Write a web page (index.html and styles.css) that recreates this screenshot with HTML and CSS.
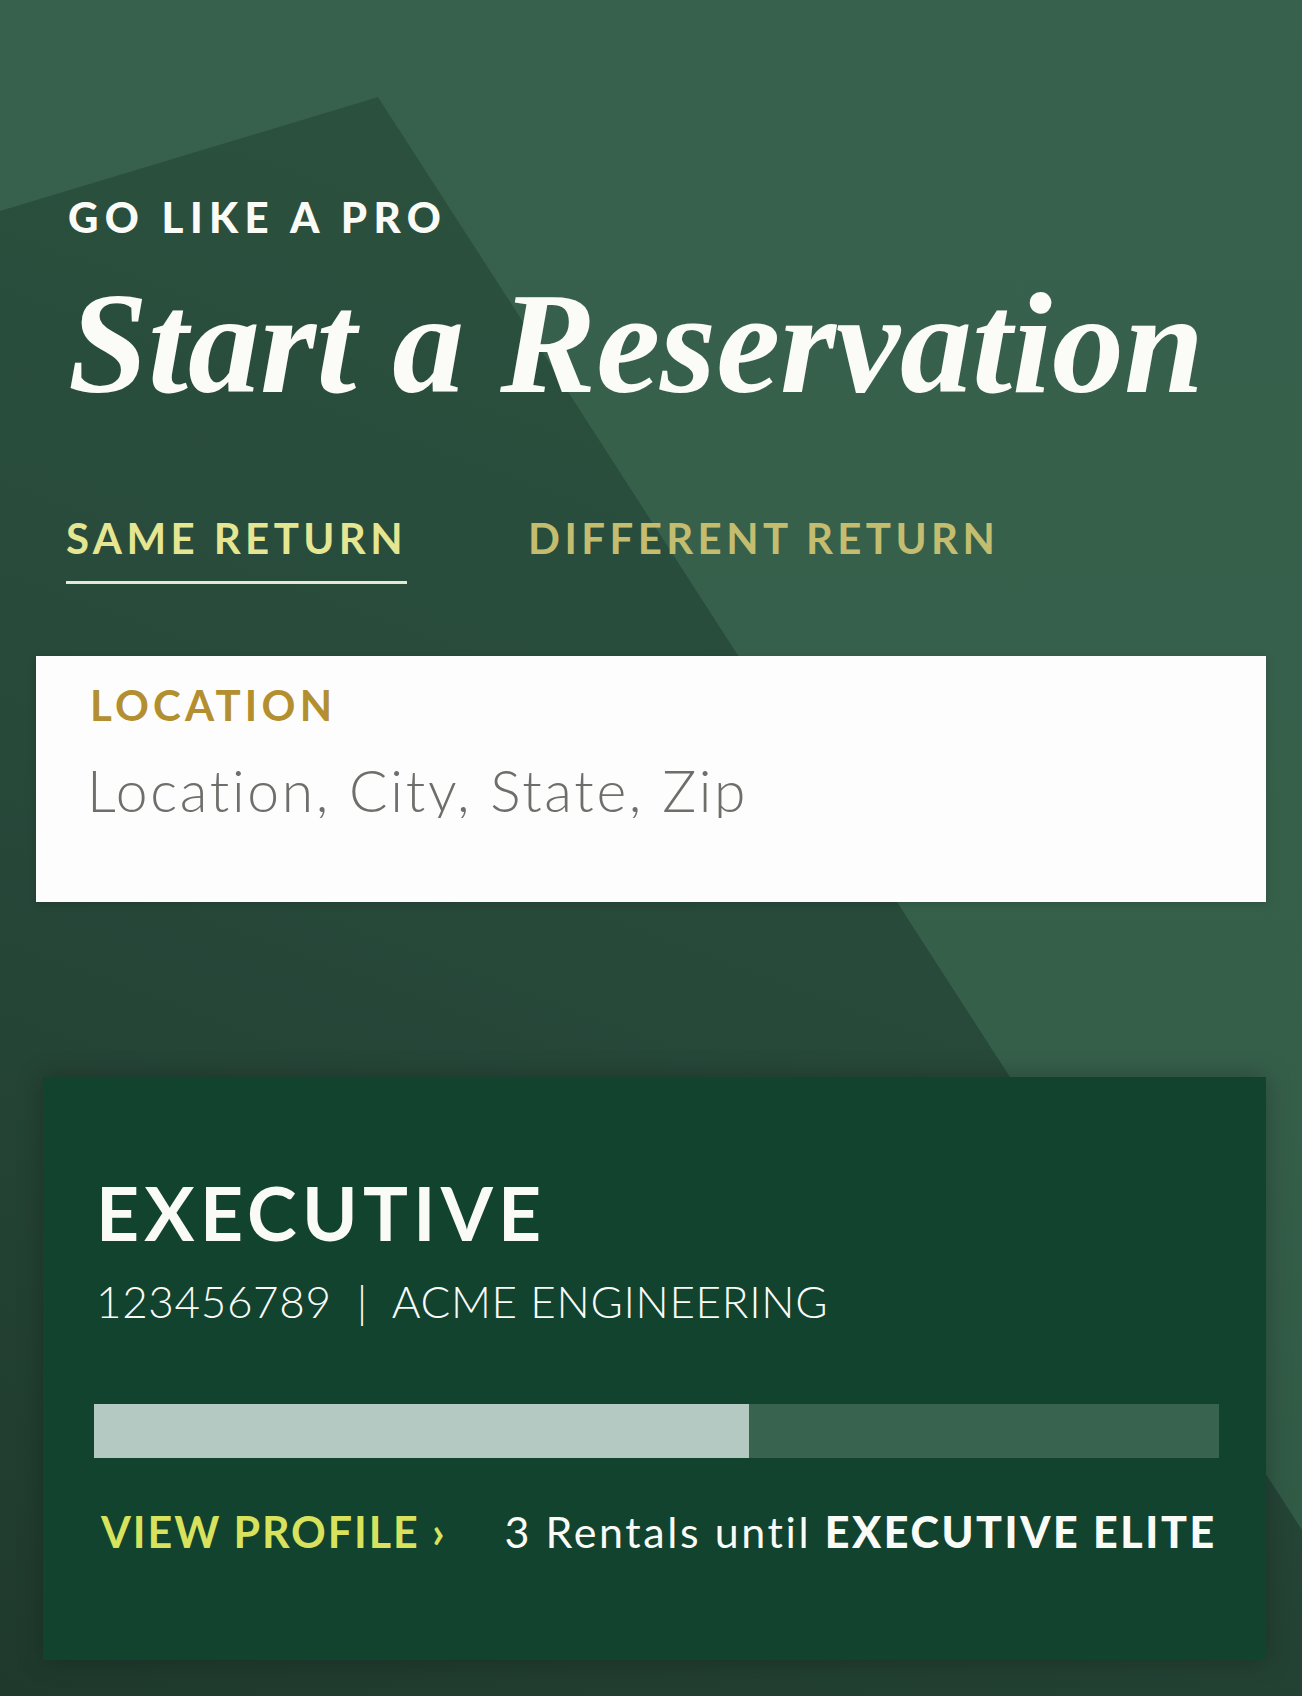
FILE: index.html
```html
<!DOCTYPE html>
<html lang="en">
<head>
  <meta charset="UTF-8">
  <meta name="viewport" content="width=device-width, initial-scale=1.0">
  <title>Start a Reservation</title>
  <link rel="stylesheet" href="styles.css">
</head>
<body>
  <div class="page">
    <svg class="backdrop" viewBox="0 0 1302 1696" preserveAspectRatio="none" aria-hidden="true">
      <defs>
        <linearGradient id="light" x1="0" y1="0" x2="0" y2="1">
          <stop offset="0" stop-color="#38614d"/>
          <stop offset="0.6" stop-color="#365f4a"/>
          <stop offset="1" stop-color="#2f5944"/>
        </linearGradient>
        <linearGradient id="dark" x1="0.3" y1="0" x2="0" y2="1">
          <stop offset="0" stop-color="#2b513e"/>
          <stop offset="0.45" stop-color="#27493a"/>
          <stop offset="1" stop-color="#1f3a2d"/>
        </linearGradient>
      </defs>
      <rect width="1302" height="1696" fill="url(#light)"/>
      <polygon points="0,211 378,97 1302,1530 1302,1696 0,1696" fill="url(#dark)"/>
    </svg>

    <header class="hero">
      <p class="eyebrow">GO LIKE A PRO</p>
      <h1 class="title">Start a Reservation</h1>
    </header>

    <nav class="tabs">
      <a class="tab active" href="#">SAME RETURN</a>
      <a class="tab" href="#">DIFFERENT RETURN</a>
    </nav>

    <label class="location">
      <span class="location-label">LOCATION</span>
      <input class="location-input" type="text" placeholder="Location, City, State, Zip">
    </label>

    <section class="status-card">
      <h2 class="tier">EXECUTIVE</h2>
      <p class="member">123456789 &nbsp;|&nbsp; ACME ENGINEERING</p>
      <div class="progress">
        <div class="progress-fill" style="width: 58.2%"></div>
      </div>
      <div class="card-footer">
        <a class="profile-link" href="#">VIEW PROFILE ›</a>
        <span class="next-tier">3 Rentals until <strong>EXECUTIVE ELITE</strong></span>
      </div>
    </section>
  </div>
</body>
</html>
```

FILE: styles.css
```css
body {
  margin: 0;
  font-family: Lato, 'Open Sans', sans-serif;
  color: #fafaf7;
  background: #2c5140;
}
.page {
  position: relative;
  width: 1302px;
  height: 1696px;
  overflow: hidden;
}
.backdrop {
  position: absolute;
  top: 0;
  left: 0;
  width: 100%;
  height: 100%;
  z-index: 0;
}
.hero, .tabs, .location, .status-card {
  position: relative;
  z-index: 1;
}
.hero {
  padding: 196px 0 0 68px;
}
.eyebrow {
  margin: 0;
  font-size: 42px;
  line-height: 1;
  font-weight: 900;
  letter-spacing: 0.152em;
}
.title {
  margin: 34px 0 0;
  font-family: 'Liberation Serif', 'DejaVu Serif', serif;
  font-style: italic;
  font-weight: 700;
  font-size: 144px;
  line-height: 1;
  color: #fbfbf8;
}
.tabs {
  display: flex;
  gap: 121px;
  margin: 101px 0 0 66px;
}
.tab {
  font-size: 42px;
  line-height: 1;
  font-weight: 700;
  letter-spacing: 0.105em;
  text-decoration: none;
  color: #c4bd70;
  padding-bottom: 22px;
}
.tab.active {
  color: #e6e692;
  border-bottom: 3px solid #e4e9d6;
}
.location {
  display: flex;
  flex-direction: column;
  gap: 35px;
  margin: 72px 36px 0 36px;
  padding: 28px 54px 84px;
  background: #fdfdfd;
  box-shadow: 0 2px 8px rgba(0, 0, 0, 0.15);
}
.location-label {
  font-size: 42px;
  line-height: 1;
  font-weight: 700;
  letter-spacing: 0.1em;
  color: #b38f2f;
}
.location-input {
  border: none;
  outline: none;
  padding: 0;
  margin-left: -3px;
  background: transparent;
  font-family: Lato, 'Open Sans', sans-serif;
  font-size: 57px;
  line-height: 1;
  height: 57px;
  font-weight: 300;
  letter-spacing: 0.047em;
  color: #555;
}
.location-input::placeholder {
  color: #6e6e6b;
}
.status-card {
  margin: 175px 36px 0 43px;
  padding: 98px 47px 107px 51px;
  background: #11432f;
  box-shadow: 0 0 24px rgba(0, 0, 0, 0.25);
}
.tier {
  margin: 0 0 0 2px;
  font-size: 75px;
  line-height: 1;
  font-weight: 700;
  letter-spacing: 0.07em;
}
.member {
  margin: 29px 0 0 2px;
  font-size: 44px;
  line-height: 1;
  font-weight: 300;
  letter-spacing: 0.015em;
}
.progress {
  margin-top: 81px;
  height: 54px;
  background: #37634f;
}
.progress-fill {
  height: 100%;
  background: #b4c9c1;
}
.card-footer {
  display: flex;
  gap: 58px;
  margin: 52px -20px 0 7px;
  font-size: 43px;
  line-height: 1;
  white-space: nowrap;
}
.profile-link {
  flex-shrink: 0;
  font-weight: 700;
  letter-spacing: 0.045em;
  color: #d8e25c;
  text-decoration: none;
}
.next-tier {
  flex-shrink: 0;
  letter-spacing: 0.06em;
}
.next-tier strong {
  font-weight: 900;
  letter-spacing: 0.06em;
}
```
